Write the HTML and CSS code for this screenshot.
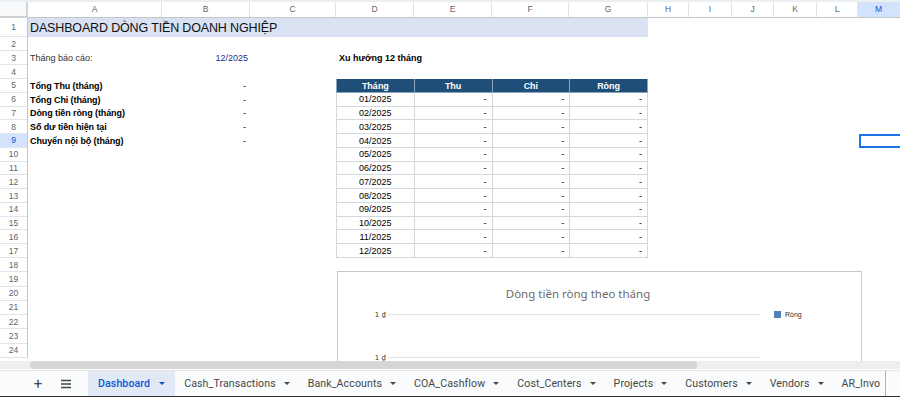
FILE: index.html
```html
<!DOCTYPE html>
<html lang="vi">
<head>
    <meta charset="UTF-8">
    <meta name="viewport" content="width=device-width, initial-scale=1.0">
    <title>Dashboard - Dòng tiền</title>
    <link rel="stylesheet" href="styles.css">
</head>
<body>
    <div class="app">
        <div class="top-strip"></div>

        <div class="sheet">
            <div class="corner"></div>

            <div class="col-heads">
                <div>A</div><div>B</div><div>C</div><div>D</div><div>E</div><div>F</div>
                <div>G</div><div>H</div><div>I</div><div>J</div><div>K</div><div>L</div>
                <div class="active">M</div>
            </div>

            <div class="row-heads">
                <div>1</div><div>2</div><div>3</div><div>4</div><div>5</div><div>6</div>
                <div>7</div><div>8</div><div class="active">9</div><div>10</div><div>11</div><div>12</div>
                <div>13</div><div>14</div><div>15</div><div>16</div><div>17</div><div>18</div>
                <div>19</div><div>20</div><div>21</div><div>22</div><div>23</div><div>24</div>
            </div>

            <div class="cells">
                <div class="title">DASHBOARD DÒNG TIỀN DOANH NGHIỆP</div>

                <div class="report-label">Tháng báo cáo:</div>
                <div class="report-value">12/2025</div>
                <div class="trend-title">Xu hướng 12 tháng</div>

                <div class="kpis">
                    <div class="kpi"><span>Tổng Thu (tháng)</span><span class="num">-</span></div>
                    <div class="kpi"><span>Tổng Chi (tháng)</span><span class="num">-</span></div>
                    <div class="kpi"><span>Dòng tiền ròng (tháng)</span><span class="num">-</span></div>
                    <div class="kpi"><span>Số dư tiền hiện tại</span><span class="num">-</span></div>
                    <div class="kpi"><span>Chuyển nội bộ (tháng)</span><span class="num">-</span></div>
                </div>

                <table class="trend">
                    <thead>
                        <tr><th>Tháng</th><th>Thu</th><th>Chi</th><th>Ròng</th></tr>
                    </thead>
                    <tbody>
                        <tr><td>01/2025</td><td>-</td><td>-</td><td>-</td></tr>
                        <tr><td>02/2025</td><td>-</td><td>-</td><td>-</td></tr>
                        <tr><td>03/2025</td><td>-</td><td>-</td><td>-</td></tr>
                        <tr><td>04/2025</td><td>-</td><td>-</td><td>-</td></tr>
                        <tr><td>05/2025</td><td>-</td><td>-</td><td>-</td></tr>
                        <tr><td>06/2025</td><td>-</td><td>-</td><td>-</td></tr>
                        <tr><td>07/2025</td><td>-</td><td>-</td><td>-</td></tr>
                        <tr><td>08/2025</td><td>-</td><td>-</td><td>-</td></tr>
                        <tr><td>09/2025</td><td>-</td><td>-</td><td>-</td></tr>
                        <tr><td>10/2025</td><td>-</td><td>-</td><td>-</td></tr>
                        <tr><td>11/2025</td><td>-</td><td>-</td><td>-</td></tr>
                        <tr><td>12/2025</td><td>-</td><td>-</td><td>-</td></tr>
                    </tbody>
                </table>

                <div class="selected"></div>

                <div class="chart">
                    <svg width="525" height="98" viewBox="0 0 525 98">
                        <text class="chart-title" x="240" y="26" text-anchor="middle">Dòng tiền ròng theo tháng</text>
                        <line x1="50" y1="42.5" x2="423" y2="42.5" stroke="#e3e3e3" stroke-width="1"/>
                        <text class="axis" x="48" y="45" text-anchor="end">1 ₫</text>
                        <line x1="50" y1="85.5" x2="423" y2="85.5" stroke="#e3e3e3" stroke-width="1"/>
                        <text class="axis" x="48" y="88" text-anchor="end">1 ₫</text>
                        <rect x="436" y="39" width="7" height="7" fill="#4f81bd"/>
                        <text class="legend" x="447" y="45">Ròng</text>
                    </svg>
                </div>
            </div>
        </div>

        <div class="hscroll">
            <div class="thumb"></div>
        </div>

        <div class="tab-bar">
            <div class="tool">+</div>
            <div class="tool menu">
                <svg width="12" height="10" viewBox="0 0 12 10">
                    <path d="M1 1.5h10M1 5h10M1 8.5h10" stroke="#444746" stroke-width="1.3"/>
                </svg>
            </div>
            <div class="tab-list">
                <div class="tab active">Dashboard <span class="caret"></span></div>
                <div class="tab">Cash_Transactions <span class="caret"></span></div>
                <div class="tab">Bank_Accounts <span class="caret"></span></div>
                <div class="tab">COA_Cashflow <span class="caret"></span></div>
                <div class="tab">Cost_Centers <span class="caret"></span></div>
                <div class="tab">Projects <span class="caret"></span></div>
                <div class="tab">Customers <span class="caret"></span></div>
                <div class="tab">Vendors <span class="caret"></span></div>
                <div class="tab last">AR_Invo</div>
            </div>
        </div>
    </div>
</body>
</html>
```

FILE: styles.css
```css
body {
    margin: 0;
    padding: 0;
    background-color: #fff;
    font-family: "Liberation Sans", Arial, sans-serif;
    overflow: hidden;
}

.app {
    width: 900px;
    height: 397px;
    display: flex;
    flex-direction: column;
}

.top-strip {
    height: 2px;
    background-color: #eceff1;
}

/* sheet grid */
.sheet {
    display: grid;
    grid-template-columns: 28px 1fr;
    grid-template-rows: 16px 340px;
}

.corner {
    background-color: #f8f9fa;
    border-right: 2px solid #d0d3d6;
    border-bottom: 2px solid #d0d3d6;
    box-sizing: border-box;
}

.col-heads {
    display: grid;
    grid-template-columns: 134px 88px 86px 78px 78px 77px 79px 41px 43px 42px 43px 41px 1fr;
    border-bottom: 1px solid #c4c7c5;
    box-sizing: border-box;
}

.col-heads div {
    font-size: 8.5px;
    color: #5f6368;
    text-align: center;
    line-height: 15px;
    border-right: 1px solid #e1e3e6;
}

.col-heads .active {
    background-color: #d3e3fd;
    color: #0b57d0;
}

.row-heads {
    display: grid;
    grid-template-rows: 19px repeat(3, 14px) repeat(13, 13.77px) repeat(7, 14.3px);
    border-right: 1px solid #c4c7c5;
}

.row-heads div {
    font-size: 8.5px;
    color: #5f6368;
    display: flex;
    align-items: center;
    justify-content: center;
    border-bottom: 1px solid #e1e3e6;
}

.row-heads .active {
    background-color: #d3e3fd;
    color: #0b57d0;
}

.cells {
    position: relative;
    display: grid;
    grid-template-columns: 134px 88px 86px 78px 78px 77px 79px 41px 43px 42px 43px 41px 1fr;
    grid-template-rows: 19px repeat(3, 14px) repeat(13, 13.77px) repeat(7, 14.3px);
    font-size: 9px;
    color: #000;
}

.title {
    grid-column: 1 / 8;
    grid-row: 1;
    background-color: #d9e1f2;
    font-size: 12.5px;
    letter-spacing: -0.15px;
    display: flex;
    align-items: center;
    padding-left: 2px;
    color: #111;
}

.report-label {
    grid-column: 1;
    grid-row: 3;
    padding-left: 2px;
    display: flex;
    align-items: center;
    color: #333;
}

.report-value {
    grid-column: 2;
    grid-row: 3;
    display: flex;
    align-items: center;
    justify-content: flex-end;
    padding-right: 2px;
    color: #1c2f8a;
}

.trend-title {
    grid-column: 4 / 6;
    grid-row: 3;
    font-weight: bold;
    display: flex;
    align-items: center;
    padding-left: 3px;
}

.kpis {
    grid-column: 1 / 3;
    grid-row: 5 / 10;
    display: flex;
    flex-direction: column;
}

.kpi {
    height: 13.77px;
    display: flex;
    align-items: center;
    justify-content: space-between;
    padding: 0 4px 0 2px;
    font-weight: bold;
    letter-spacing: -0.1px;
}

.kpi .num {
    font-weight: normal;
}

/* trend table */
.trend {
    grid-column: 4 / 8;
    grid-row: 5 / 18;
    border-collapse: collapse;
    table-layout: fixed;
    width: 100%;
    height: 100%;
    font-size: 9px;
}

.trend th {
    background-color: #1f4e79;
    color: #fff;
    font-weight: bold;
    height: 13px;
    padding: 0;
    border: 1px solid #8aa4c0;
    border-top: none;
}

.trend td {
    padding: 0 5px;
    border: 1px solid #d4d7db;
    text-align: right;
    height: 12px;
}

.trend td:first-child {
    text-align: center;
}

.selected {
    grid-column: 13;
    grid-row: 9;
    border: 2px solid #1a73e8;
    margin: 0 -4px 0 1px;
}

/* floating chart */
.chart {
    position: absolute;
    left: 309px;
    top: 253px;
    width: 525px;
    height: 98px;
    border: 1px solid #c8c8c8;
    box-sizing: border-box;
    background-color: #fff;
}

.chart svg {
    display: block;
}

.chart-title {
    font-family: "Noto Sans", sans-serif;
    font-size: 11.5px;
    fill: #6b6b6b;
}

.axis {
    font-family: "DejaVu Sans", sans-serif;
    font-size: 7px;
    fill: #333;
}

.legend {
    font-size: 7px;
    fill: #333;
}

/* horizontal scrollbar */
.hscroll {
    position: relative;
    z-index: 2;
    height: 12px;
    display: flex;
    align-items: center;
    padding-left: 30px;
    background: linear-gradient(to bottom, transparent 3px, #eeeeee 3px, #eeeeee 11px, #fff 11px);
}

.hscroll .thumb {
    width: 667px;
    height: 8px;
    margin-top: 2px;
    border-radius: 4px;
    background-color: #d6d6d6;
}

/* sheet tabs */
.tab-bar {
    position: relative;
    z-index: 2;
    flex: 1;
    display: flex;
    align-items: stretch;
    background-color: #f9fbfd;
    border-top: 1px solid #e1e3e6;
    border-bottom: 1px solid #2e2e2e;
    font-family: Roboto, "Liberation Sans", sans-serif;
    font-size: 10.6px;
    color: #444746;
}

.tool {
    width: 28px;
    display: flex;
    align-items: center;
    justify-content: center;
    font-size: 15px;
}

.tool:first-child {
    margin-left: 24px;
}

.tool.menu {
    margin-right: 8px;
}

.tab-list {
    width: 797px;
    display: flex;
    overflow: hidden;
    border-right: 1px solid #b0b3b6;
}

.tab {
    display: flex;
    align-items: center;
    gap: 8px;
    padding: 0 9px;
    white-space: nowrap;
    letter-spacing: 0.1px;
}

.tab.active {
    background-color: #e1e9f7;
    color: #0b57d0;
    font-weight: 500;
    gap: 9px;
    padding: 0 10px;
}

.caret {
    width: 0;
    height: 0;
    border-left: 3px solid transparent;
    border-right: 3px solid transparent;
    border-top: 3px solid currentColor;
}
```
